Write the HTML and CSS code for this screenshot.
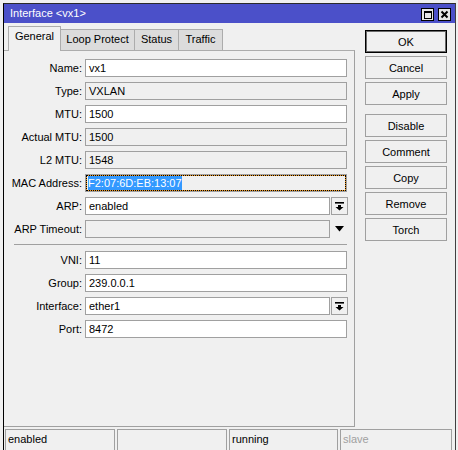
FILE: index.html
```html
<!DOCTYPE html>
<html>
<head>
<meta charset="utf-8">
<link rel="stylesheet" href="styles.css">
</head>
<body>
<div class="screen">
  <div class="window">
    <div class="titlebar">
      <span class="title">Interface &lt;vx1&gt;</span>
      <div class="tb-buttons">
        <span class="tb-btn"><span class="max-glyph"></span></span>
        <span class="tb-btn">
          <svg width="11" height="11" viewBox="0 0 11 11"><path d="M2.5 2.5 L8.5 8.5 M8.5 2.5 L2.5 8.5" stroke="#000" stroke-width="2" fill="none"/></svg>
        </span>
      </div>
    </div>
    <div class="body">
      <div class="main">
        <div class="tabs">
          <div class="tab active t-general">General</div>
          <div class="tab t-loop">Loop Protect</div>
          <div class="tab t-status">Status</div>
          <div class="tab t-traffic">Traffic</div>
        </div>
        <div class="panel">
          <div class="rows">
            <div class="row"><label class="lbl">Name:</label><div class="field edit">vx1</div></div>
            <div class="row"><label class="lbl">Type:</label><div class="field ro">VXLAN</div></div>
            <div class="row"><label class="lbl">MTU:</label><div class="field edit">1500</div></div>
            <div class="row"><label class="lbl">Actual MTU:</label><div class="field ro">1500</div></div>
            <div class="row"><label class="lbl">L2 MTU:</label><div class="field ro">1548</div></div>
            <div class="row"><label class="lbl">MAC Address:</label><div class="field ro focus"><div class="focus-rect"><span class="sel">F2:07:6D:EB:13:07</span></div></div></div>
            <div class="row"><label class="lbl">ARP:</label><div class="field edit short">enabled</div><span class="dd-btn"><svg width="11" height="10" viewBox="0 0 11 10"><rect x="1" y="1" width="9" height="1.6" fill="#000"/><path d="M4 4 H7 V6 H9.5 L5.5 9.5 L1.5 6 H4 Z" fill="#000"/></svg></span></div>
            <div class="row"><label class="lbl">ARP Timeout:</label><div class="field ro short"></div><span class="dd-plain"><svg width="9" height="6" viewBox="0 0 9 6"><path d="M0 0 H9 L4.5 5.5 Z" fill="#000"/></svg></span></div>
          </div>
          <div class="sep"></div>
          <div class="rows">
            <div class="row"><label class="lbl">VNI:</label><div class="field edit">11</div></div>
            <div class="row"><label class="lbl">Group:</label><div class="field edit">239.0.0.1</div></div>
            <div class="row"><label class="lbl">Interface:</label><div class="field edit short">ether1</div><span class="dd-btn"><svg width="11" height="10" viewBox="0 0 11 10"><rect x="1" y="1" width="9" height="1.6" fill="#000"/><path d="M4 4 H7 V6 H9.5 L5.5 9.5 L1.5 6 H4 Z" fill="#000"/></svg></span></div>
            <div class="row"><label class="lbl">Port:</label><div class="field edit">8472</div></div>
          </div>
        </div>
      </div>
      <div class="buttons">
        <button class="btn default">OK</button>
        <button class="btn">Cancel</button>
        <button class="btn">Apply</button>
        <button class="btn group-start">Disable</button>
        <button class="btn">Comment</button>
        <button class="btn">Copy</button>
        <button class="btn">Remove</button>
        <button class="btn">Torch</button>
      </div>
    </div>
    <div class="status">
      <div class="cell c1">enabled</div>
      <div class="cell c2"></div>
      <div class="cell c3">running</div>
      <div class="cell c4 dim">slave</div>
    </div>
  </div>
</div>
</body>
</html>
```
FILE: styles.css
```css
html, body {
  margin: 0;
  padding: 0;
  background: #f0f0f0;
}
.screen {
  width: 458px;
  height: 450px;
  overflow: hidden;
  font-family: "Liberation Sans", Arial, sans-serif;
  font-size: 11px;
  color: #000;
  background: #f0f0f0;
}
.window {
  margin: 3px 0 0 3px;
  width: 453px;
  height: 447px;
  box-sizing: border-box;
  border-left: 1px solid #000;
  border-right: 1px solid #404040;
  border-top: 1px solid #2a2a2a;
  background: #f0f0f0;
  display: flex;
  flex-direction: column;
}
.titlebar {
  height: 19px;
  flex: none;
  background: #4b50c9;
  display: flex;
  justify-content: space-between;
  align-items: flex-start;
}
.title {
  color: #fff;
  font-size: 11px;
  line-height: 19px;
  padding-left: 6px;
}
.tb-buttons {
  display: flex;
  gap: 4px;
  padding-top: 4px;
  padding-right: 4px;
}
.tb-btn {
  width: 13px;
  height: 13px;
  box-sizing: border-box;
  border: 1px solid #000;
  background: #e6e6e6;
  display: flex;
  align-items: center;
  justify-content: center;
}
.max-glyph {
  width: 8px;
  height: 8px;
  box-sizing: border-box;
  border: 1px solid #000;
  border-top-width: 2px;
}
.body {
  display: flex;
  padding-top: 3px;
  flex: none;
}
.main {
  width: 351px;
  flex: none;
}
.tabs {
  display: flex;
  height: 24px;
  padding-left: 4px;
  align-items: flex-start;
}
.tab {
  height: 21px;
  margin-top: 3px;
  box-sizing: border-box;
  border: 1px solid #acacac;
  border-bottom: none;
  background: #dcdcdc;
  line-height: 19px;
  text-align: center;
  margin-left: -1px;
  position: relative;
}
.tab.active {
  margin-top: 0;
  height: 25px;
  margin-left: 0;
  background: #f0f0f0;
  z-index: 1;
  line-height: 17px;
  padding-top: 1px;
}
.t-general { width: 53px; }
.t-loop { width: 75px; }
.t-status { width: 45px; }
.t-traffic { width: 45px; }
.panel {
  height: 377px;
  box-sizing: border-box;
  border-top: 1px solid #acacac;
  border-right: 1px solid #a0a0a0;
  border-bottom: 1px solid #a0a0a0;
  padding-top: 8px;
}
.rows {
  display: flex;
  flex-direction: column;
  gap: 5px;
}
.row {
  display: flex;
  align-items: center;
  height: 18px;
}
.lbl {
  width: 78px;
  text-align: right;
  margin-right: 3px;
  flex: none;
  white-space: nowrap;
}
.field {
  width: 262px;
  height: 18px;
  box-sizing: border-box;
  border: 1px solid #a0a0a0;
  padding-left: 3px;
  line-height: 16px;
  white-space: nowrap;
  overflow: hidden;
}
.field.short {
  width: 245px;
}
.edit { background: #fff; }
.ro { background: #f0f0f0; }
.field.focus {
  padding: 0;
}
.focus-rect {
  height: 16px;
  box-sizing: border-box;
  border: 1px dotted #000;
  background: linear-gradient(#f0f0f0, #f0f0f0) padding-box, linear-gradient(#f39a1e, #f39a1e) border-box;
  line-height: 14px;
  padding-left: 1px;
}
.sel {
  background: #3399ff;
  color: #fff;
  display: inline-block;
  line-height: 14px;
}
.dd-btn {
  width: 17px;
  height: 18px;
  margin-left: 1px;
  box-sizing: border-box;
  border: 1px solid #a0a0a0;
  background: #f0f0f0;
  display: flex;
  align-items: center;
  justify-content: center;
}
.dd-plain {
  width: 17px;
  margin-left: 1px;
  display: flex;
  justify-content: center;
  align-items: center;
  height: 18px;
}
.sep {
  margin: 6px 7px 6px 10px;
  height: 1px;
  background: #a0a0a0;
}
.buttons {
  margin-left: 10px;
  margin-top: 4px;
  display: flex;
  flex-direction: column;
  gap: 3px;
}
.btn {
  width: 82px;
  height: 23px;
  box-sizing: border-box;
  border: 1px solid #a0a0a0;
  background: #f0f0f0;
  font-family: "Liberation Sans", Arial, sans-serif;
  font-size: 11px;
  color: #000;
  padding: 0;
  margin: 0;
}
.btn.default {
  border: 1px solid #000;
  box-shadow: inset 0 0 0 1px #6a6a6a;
}
.btn.group-start {
  margin-top: 6px;
}
.status {
  display: flex;
  gap: 2px;
  margin-top: 2px;
  padding-left: 1px;
}
.cell {
  height: 21px;
  box-sizing: border-box;
  border: 1px solid #a0a0a0;
  border-bottom: none;
  padding-left: 2px;
  line-height: 18px;
}
.c1 { width: 110px; }
.c2 { width: 110px; }
.c3 { width: 109px; }
.c4 { width: 112px; }
.dim { color: #a0a0a0; }
```
